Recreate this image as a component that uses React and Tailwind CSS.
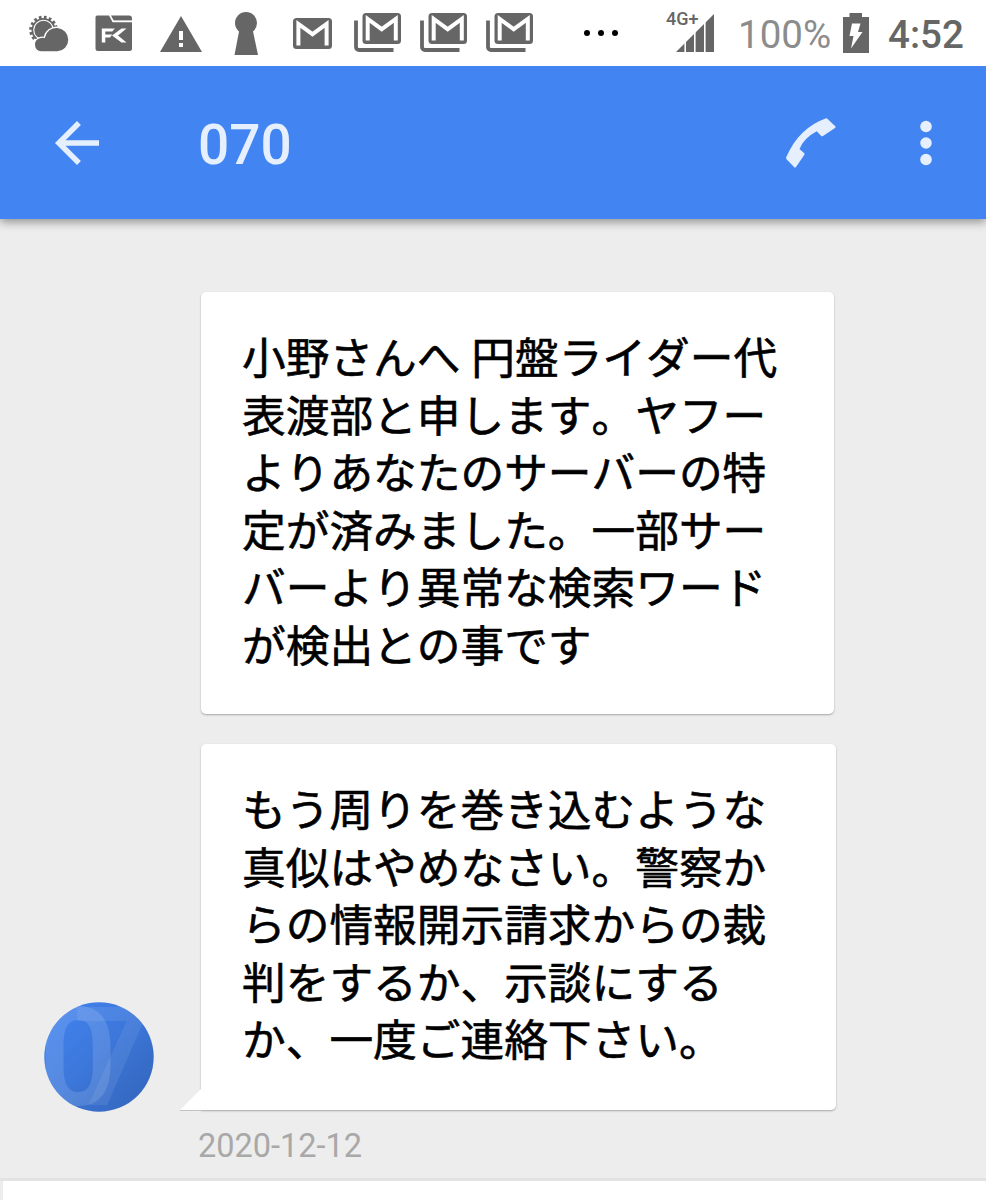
import React from "react";

const messages = [
  {
    id: 1,
    lines: [
      "小野さんへ 円盤ライダー代",
      "表渡部と申します。ヤフー",
      "よりあなたのサーバーの特",
      "定が済みました。一部サー",
      "バーより異常な検索ワード",
      "が検出との事です",
    ],
  },
  {
    id: 2,
    lines: [
      "もう周りを巻き込むような",
      "真似はやめなさい。警察か",
      "らの情報開示請求からの裁",
      "判をするか、示談にする",
      "か、一度ご連絡下さい。",
    ],
  },
];

function WeatherIcon() {
  return (
    <svg width="42" height="40" viewBox="0 0 42 40" className="shrink-0">
      <circle cx="15.500" cy="17" r="12.600" fill="none" stroke="#666" strokeWidth="3.400" strokeDasharray="2.600 2.350" />
      <circle cx="15.500" cy="17" r="12" fill="#666" />
      <circle cx="15.500" cy="17" r="9.800" fill="#666" stroke="#fff" strokeWidth="1.100" />
      <path
        d="M13 39a7.300 7.300 0 0 1-1.300-14.300 6.800 6.800 0 0 1 4.600-.2A12.400 12.400 0 1 1 29.500 39z"
        fill="#666"
        stroke="#fff"
        strokeWidth="1.300"
      />
    </svg>
  );
}

function FolderIcon() {
  return (
    <svg width="38" height="38" viewBox="0 0 38 38" className="shrink-0">
      <path d="M3 1.500h11l3.500 6.500H37V34.500a2.500 2.500 0 0 1-2.500 2.500H3A2.500 2.500 0 0 1 .500 34.500V3.500a2 2 0 0 1 2.500-2z" fill="#666" />
      <path d="M16 1.500h18a3 3 0 0 1 3 3V6.500H18.700z" fill="#666" />
      <path d="M17 6.700l.8 1.600H37V6.700z" fill="#fff" />
      <path d="M6.800 28.500V14.500h13l-2.500 3h-7v3h7l-2.300 3h-4.700v5z" fill="#fff" />
      <path d="M31.500 14.500h-5l-9.500 7 9.500 7h5l-8.500-7z" fill="#fff" />
    </svg>
  );
}

function WarningIcon() {
  return (
    <svg width="42" height="36" viewBox="0 0 42 36" className="shrink-0">
      <path d="M21 0l21 36H0z" fill="#666" />
      <path d="M19 15h4v9h-4zM19 27h4v4h-4z" fill="#fff" />
    </svg>
  );
}

function KeyholeIcon() {
  return (
    <svg width="24" height="43" viewBox="0 0 24 43" className="shrink-0">
      <circle cx="12" cy="11" r="11" fill="#666" />
      <path d="M5.500 17h13L24 43H.500z" fill="#666" />
    </svg>
  );
}

function MailIcon() {
  return (
    <svg width="39" height="31" viewBox="0 0 39 31" className="shrink-0">
      <rect width="39" height="31" rx="3.500" fill="#666" />
      <path d="M5.400 27.500V6L19.500 16.200 33.600 6v21.500" fill="none" stroke="#fff" strokeWidth="4" />
    </svg>
  );
}

function MailStackIcon() {
  return (
    <svg width="47" height="39" viewBox="0 0 47 39" className="shrink-0">
      <path d="M2 7.500V34a3 3 0 0 0 3 3h34.500" fill="none" stroke="#666" strokeWidth="3.800" />
      <rect x="8.500" width="38.500" height="31" rx="3.500" fill="#666" />
      <path d="M13.700 27.500V6l14 10.200L41.800 6v21.500" fill="none" stroke="#fff" strokeWidth="4" />
    </svg>
  );
}

function SignalIcon() {
  return (
    <svg width="38" height="38" viewBox="0 0 38 38" className="shrink-0">
      <path d="M0 38L38 0v38z" fill="#666" />
      <path d="M9.200 0v38M18.800 0v38M28.800 0v38" stroke="#fff" strokeWidth="1.600" />
    </svg>
  );
}

function BatteryIcon() {
  return (
    <svg width="26" height="40" viewBox="0 0 26 40" className="shrink-0">
      <path d="M6.500 0h12.500v4H26v36H0V4h6.500z" fill="#666" />
      <path d="M9 10.500h8.500l-2.500 8.500h4.500L8 35.500l2.500-12.500H6.500z" fill="#fff" />
    </svg>
  );
}

function StatusBar() {
  return (
    <div className="relative z-20 flex h-[66px] items-center bg-white pl-7 pr-[22px]">
      <WeatherIcon />
      <div className="ml-[25px]">
        <FolderIcon />
      </div>
      <div className="ml-[27px] mt-[2px]">
        <WarningIcon />
      </div>
      <div className="ml-8">
        <KeyholeIcon />
      </div>
      <div className="ml-[35px]">
        <MailIcon />
      </div>
      <div className="ml-[22px] mt-[-1px] flex gap-[19px]">
        <MailStackIcon />
        <MailStackIcon />
        <MailStackIcon />
      </div>
      <div className="ml-[51px] flex gap-2">
        <span className="size-[6px] rounded-full bg-black" />
        <span className="size-[6px] rounded-full bg-black" />
        <span className="size-[6px] rounded-full bg-black" />
      </div>
      <div className="relative ml-[58px]">
        <SignalIcon />
        <span className="absolute -left-[10px] -top-[5px] text-[18px] leading-5 font-medium text-[#666]">4G+</span>
      </div>
      <span className="ml-[24px] mt-[5px] w-[94px] text-[38.500px] leading-none text-[#8c8c8c]">100%</span>
      <div className="ml-[11px]">
        <BatteryIcon />
      </div>
      <span className="ml-[19px] mt-[5px] text-[38.500px] leading-none font-medium text-[#666]">4:52</span>
    </div>
  );
}

function AppBar() {
  return (
    <header className="z-10 flex h-[153px] items-center bg-[#4285f2] pl-11 pr-[27px] text-[#e6effd] shadow-[0_3px_9px_rgba(0,0,0,0.4)]">
      <button aria-label="Back">
        <svg width="66" height="66" viewBox="0 0 24 24" fill="currentColor">
          <path d="M20 11H7.830l5.590-5.590L12 4l-8 8 8 8 1.410-1.410L7.830 13H20v-2z" />
        </svg>
      </button>
      <h1 className="ml-[88px] mt-[6px] text-[55px] leading-none font-medium">070</h1>
      <button aria-label="Call" className="ml-auto">
        <svg width="50" height="50" viewBox="0 0 50 50" fill="currentColor">
          <path d="M39.500.500Q40.700 0 41.600.900L49.300 8.200Q50 9.200 49 10L37 18Q36 18.700 35 17.700L30.700 13.300Q18 20 13.500 31L18 35Q18.800 36 18.200 37L10 49Q9 50 8 49L.800 41.500Q-.300 40.500.300 39Q13 10 39.500.500z" />
        </svg>
      </button>
      <button aria-label="More options" className="ml-[57px]">
        <svg width="66" height="66" viewBox="0 0 24 24" fill="currentColor">
          <circle cx="12" cy="6" r="2.100" />
          <circle cx="12" cy="12" r="2.100" />
          <circle cx="12" cy="18" r="2.100" />
        </svg>
      </button>
    </header>
  );
}

function Avatar() {
  return (
    <svg width="110" height="110" viewBox="0 0 110 110" className="mb-[-2px] shrink-0">
      <defs>
        <linearGradient id="avatarFill" x1="0.15" y1="0.15" x2="0.85" y2="0.85">
          <stop offset="0" stopColor="#4080ea" />
          <stop offset="0.4" stopColor="#3d79dd" />
          <stop offset="1" stopColor="#3569c2" />
        </linearGradient>
        <clipPath id="avatarClip">
          <circle cx="55" cy="55" r="54.700" />
        </clipPath>
      </defs>
      <g clipPath="url(#avatarClip)">
        <rect width="110" height="110" fill="url(#avatarFill)" />
        <g fill="#fff" fontSize="137" fontWeight="600">
          <text x="-5" y="103" fillOpacity="0.13">0</text>
          <text x="29" y="103" fillOpacity="0.08">7</text>
        </g>
      </g>
    </svg>
  );
}

function Lines({ lines }) {
  return (
    <p className="whitespace-nowrap text-[43.7px] leading-[57.6px] text-black [-webkit-text-stroke:0.6px_black] [font-kerning:none]">
      {lines.map((line) => (
        <span key={line} className="block">
          {line}
        </span>
      ))}
    </p>
  );
}

export default function App() {
  const [first, second] = messages;

  return (
    <div
      lang="ja"
      className="flex h-[1200px] w-[986px] flex-col overflow-hidden bg-[#ededed] font-[Roboto,'Noto_Sans_CJK_JP',sans-serif]"
    >
      <StatusBar />
      <AppBar />

      {/* Conversation */}
      <main className="flex grow flex-col pt-[73px]">
        <div className="ml-[201px] h-[422px] w-[633px] rounded-[5px] bg-white pl-[41px] pt-[39px] shadow-[0_1px_2px_rgba(0,0,0,0.3)]">
          <Lines lines={first.lines} />
        </div>

        <div className="mt-[30px] flex items-end pl-[43.500px]">
          <Avatar />
          <svg width="22" height="23" viewBox="0 0 22 23" className="z-10 mr-[-1px] mb-[-1px] ml-[26.500px] shrink-0">
            <path d="M22 0v22H0z" fill="#fff" />
            <path d="M0 22.500h22" stroke="#c4c4c4" />
          </svg>
          <div className="h-[366px] w-[635px] rounded-[5px] rounded-bl-none bg-white pl-[41px] pt-[39px] shadow-[0_1px_2px_rgba(0,0,0,0.3)]">
            <Lines lines={second.lines} />
          </div>
        </div>

        <time className="ml-[198px] mt-[17px] text-[32.500px] leading-[38px] text-[#a8a8a8]">2020-12-12</time>
      </main>

      {/* Compose area */}
      <footer className="h-[22px] shrink-0 border-t-[3px] border-[#e3e3e3] pl-[3px]">
        <div className="h-full bg-white" />
      </footer>
    </div>
  );
}
